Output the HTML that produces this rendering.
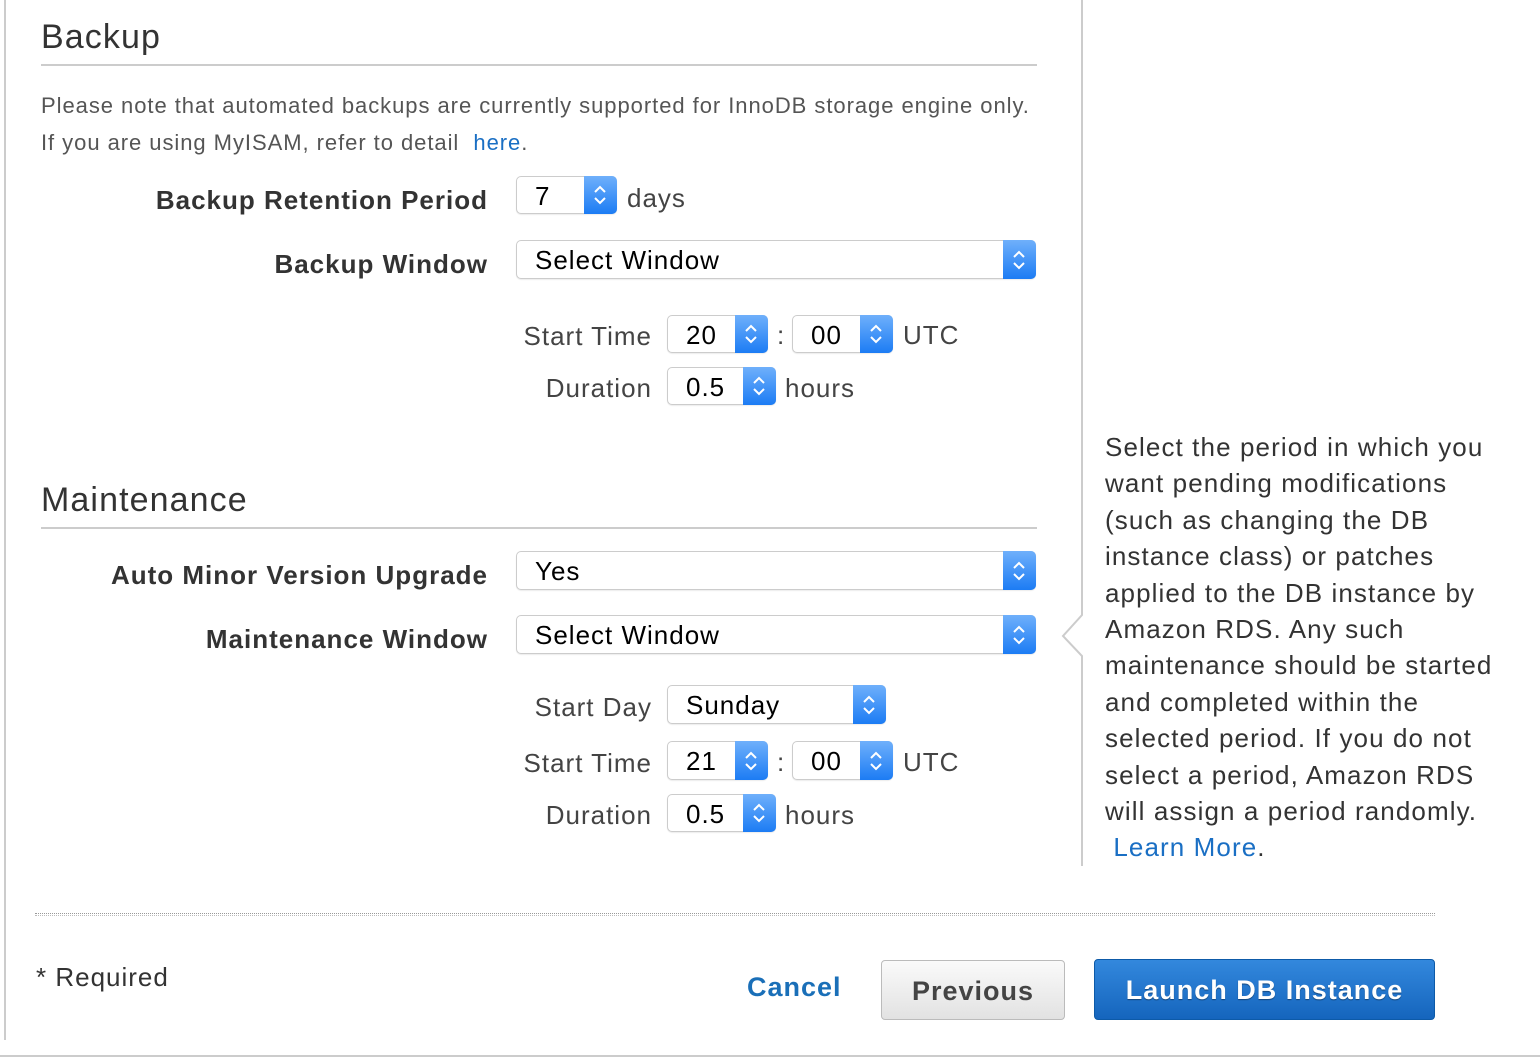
<!DOCTYPE html>
<html><head><meta charset="utf-8"><style>
*{margin:0;padding:0;box-sizing:border-box}
body{width:1540px;height:1060px;background:#fff;position:relative;overflow:hidden;font-family:"Liberation Sans",Helvetica,Arial,sans-serif;color:#333;letter-spacing:1px}
.a{position:absolute;white-space:nowrap}
.h{font-size:34px;color:#333;letter-spacing:1.1px}
.line{position:absolute;height:2px;background:#ccc}
.lbl{position:absolute;font-size:26px;font-weight:bold;color:#333;text-align:right;white-space:nowrap;line-height:30px}
.sl{position:absolute;font-size:26px;color:#444;text-align:right;white-space:nowrap;line-height:30px}
.sel{position:absolute;border:1px solid #ccc;border-radius:5px;background:#fff;font-size:26px;color:#000;line-height:38px;padding-left:18px;box-shadow:0 1px 1px rgba(0,0,0,.08)}
.sel .b{position:absolute;right:-1px;top:-1px;bottom:-1px;width:33px;border-radius:0 5px 5px 0;background:linear-gradient(#6fb0fb,#1c7cf4)}
.sel .b svg{position:absolute;left:8px;top:50%;margin-top:-10px}
.t{position:absolute;font-size:26px;color:#444;line-height:30px;white-space:nowrap}
</style></head><body>
<div style="position:absolute;left:4px;top:0;width:2px;height:1040px;background:#ccc"></div>
<div style="position:absolute;left:0;top:1055px;width:1540px;height:2px;background:#ccc"></div>

<div class="a h" style="left:41px;top:18px">Backup</div>
<div class="line" style="left:41px;top:64px;width:996px"></div>
<div class="a" style="left:41px;top:87px;font-size:22px;color:#555;line-height:37px;letter-spacing:0.95px">Please note that automated backups are currently supported for InnoDB storage engine only.<br>If you are using MyISAM, refer to detail <span style="color:#1a6fc4">&nbsp;here</span>.</div>

<div class="lbl" style="right:1052px;top:185px">Backup Retention Period</div>
<div class="sel" style="left:516px;top:176px;width:101px;height:38px">7<div class="b"><svg width="16" height="20" viewBox="0 0 16 20"><path d="M3 7l5-5 5 5M3 13l5 5 5-5" fill="none" stroke="#fff" stroke-width="2"/></svg></div></div>
<div class="t" style="left:627px;top:183px">days</div>

<div class="lbl" style="right:1052px;top:249px">Backup Window</div>
<div class="sel" style="left:516px;top:240px;width:520px;height:39px">Select Window<div class="b"><svg width="16" height="20" viewBox="0 0 16 20"><path d="M3 7l5-5 5 5M3 13l5 5 5-5" fill="none" stroke="#fff" stroke-width="2"/></svg></div></div>

<div class="sl" style="right:888px;top:321px">Start Time</div>
<div class="sel" style="left:667px;top:315px;width:101px;height:38px">20<div class="b"><svg width="16" height="20" viewBox="0 0 16 20"><path d="M3 7l5-5 5 5M3 13l5 5 5-5" fill="none" stroke="#fff" stroke-width="2"/></svg></div></div>
<div class="t" style="left:777px;top:320px">:</div>
<div class="sel" style="left:792px;top:315px;width:101px;height:38px">00<div class="b"><svg width="16" height="20" viewBox="0 0 16 20"><path d="M3 7l5-5 5 5M3 13l5 5 5-5" fill="none" stroke="#fff" stroke-width="2"/></svg></div></div>
<div class="t" style="left:903px;top:320px">UTC</div>

<div class="sl" style="right:888px;top:373px">Duration</div>
<div class="sel" style="left:667px;top:367px;width:109px;height:38px">0.5<div class="b"><svg width="16" height="20" viewBox="0 0 16 20"><path d="M3 7l5-5 5 5M3 13l5 5 5-5" fill="none" stroke="#fff" stroke-width="2"/></svg></div></div>
<div class="t" style="left:785px;top:373px">hours</div>

<div class="a h" style="left:41px;top:481px">Maintenance</div>
<div class="line" style="left:41px;top:527px;width:996px"></div>

<div class="lbl" style="right:1052px;top:560px">Auto Minor Version Upgrade</div>
<div class="sel" style="left:516px;top:551px;width:520px;height:39px">Yes<div class="b"><svg width="16" height="20" viewBox="0 0 16 20"><path d="M3 7l5-5 5 5M3 13l5 5 5-5" fill="none" stroke="#fff" stroke-width="2"/></svg></div></div>

<div class="lbl" style="right:1052px;top:624px">Maintenance Window</div>
<div class="sel" style="left:516px;top:615px;width:520px;height:39px">Select Window<div class="b"><svg width="16" height="20" viewBox="0 0 16 20"><path d="M3 7l5-5 5 5M3 13l5 5 5-5" fill="none" stroke="#fff" stroke-width="2"/></svg></div></div>

<div class="sl" style="right:888px;top:692px">Start Day</div>
<div class="sel" style="left:667px;top:685px;width:219px;height:39px">Sunday<div class="b"><svg width="16" height="20" viewBox="0 0 16 20"><path d="M3 7l5-5 5 5M3 13l5 5 5-5" fill="none" stroke="#fff" stroke-width="2"/></svg></div></div>

<div class="sl" style="right:888px;top:748px">Start Time</div>
<div class="sel" style="left:667px;top:741px;width:101px;height:39px">21<div class="b"><svg width="16" height="20" viewBox="0 0 16 20"><path d="M3 7l5-5 5 5M3 13l5 5 5-5" fill="none" stroke="#fff" stroke-width="2"/></svg></div></div>
<div class="t" style="left:777px;top:747px">:</div>
<div class="sel" style="left:792px;top:741px;width:101px;height:39px">00<div class="b"><svg width="16" height="20" viewBox="0 0 16 20"><path d="M3 7l5-5 5 5M3 13l5 5 5-5" fill="none" stroke="#fff" stroke-width="2"/></svg></div></div>
<div class="t" style="left:903px;top:747px">UTC</div>

<div class="sl" style="right:888px;top:800px">Duration</div>
<div class="sel" style="left:667px;top:794px;width:109px;height:38px">0.5<div class="b"><svg width="16" height="20" viewBox="0 0 16 20"><path d="M3 7l5-5 5 5M3 13l5 5 5-5" fill="none" stroke="#fff" stroke-width="2"/></svg></div></div>
<div class="t" style="left:785px;top:800px">hours</div>

<svg style="position:absolute;left:1058px;top:0" width="30" height="868"><path d="M24 0V615L5 636L24 656V866" fill="none" stroke="#ccc" stroke-width="2"/></svg>

<div class="a" style="left:1105px;top:429px;font-size:26px;line-height:36.4px;color:#333;letter-spacing:1.1px">Select the period in which you<br>want pending modifications<br>(such as changing the DB<br>instance class) or patches<br>applied to the DB instance by<br>Amazon RDS. Any such<br>maintenance should be started<br>and completed within the<br>selected period. If you do not<br>select a period, Amazon RDS<br>will assign a period randomly.<br><span style="color:#1a6fc4">&nbsp;Learn More</span>.</div>

<div style="position:absolute;left:35px;top:913px;width:1400px;height:3px;border-top:1px dotted #999;border-bottom:1px dotted #bbb"></div>

<div class="t" style="left:36px;top:962px;color:#333">* Required</div>
<div class="a" style="left:747px;top:972px;font-size:27px;font-weight:bold;color:#1a6fb8">Cancel</div>
<div style="position:absolute;left:881px;top:960px;width:184px;height:60px;border:1px solid #bbb;border-radius:4px;background:linear-gradient(#fafafa,#e2e2e2);text-align:center;font-size:27px;font-weight:bold;color:#444;line-height:60px">Previous</div>
<div style="position:absolute;left:1094px;top:959px;width:341px;height:61px;border:1px solid #0d5aa8;border-radius:4px;background:linear-gradient(#3388dd,#1565bd);text-align:center;font-size:27px;font-weight:bold;color:#fff;line-height:61px;text-shadow:0 1px 1px rgba(0,0,0,.4)">Launch DB Instance</div>
</body></html>
